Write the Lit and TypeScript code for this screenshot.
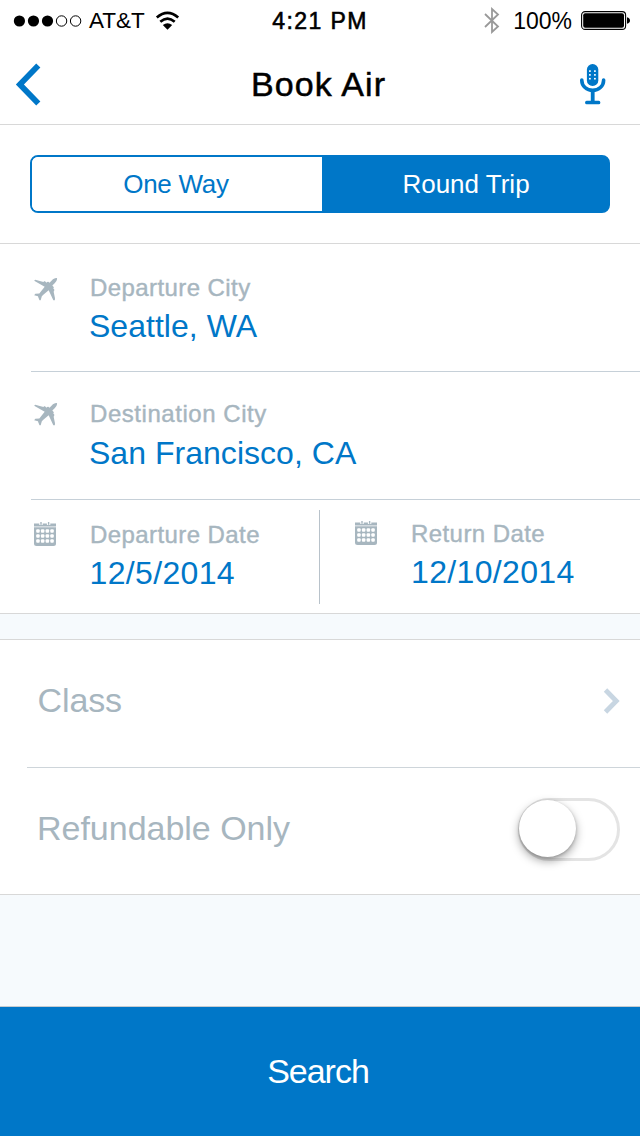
import { LitElement, html, css, svg } from "lit";
import { customElement, property, state } from "lit/decorators.js";

const plane = svg`<path d="M69 .5C63 -.5 58 2.500 54 7L46.500 14L43 11.500L39 12L37.500 14L33 10L30 10L28.500 12L3.500 5L.5 8L32 26L19 42.500L16 46.500L4 47.500L.5 51.500L12 54.500L12.500 57L16.500 67L20 67L23.500 54.500L28 50L44 37L58 66.500L62.500 67L63 61L59 41L61 37L60.500 34L58 32L59.500 28L57 25L55 22.500L62 15.500C67 10.500 70 6 69 .5Z"/>`;

@customElement("field-cell")
export class FieldCell extends LitElement {
  @property() label = "";
  @property() value = "";
  @property() icon: "plane" | "calendar" = "plane";

  static styles = css`
    :host { display: flex; align-items: flex-start; }
    .icon { flex: none; display: block; width: 25px; height: 25px; margin: var(--icon-top, 0) 31px 0 3px; fill: #a7b6bf; }
    .texts { display: flex; flex-direction: column; }
    .label { font-size: 24px; line-height: 30px; letter-spacing: var(--label-spacing, 0.42px); color: #a7b6bf; -webkit-text-stroke: 0.4px #a7b6bf; white-space: nowrap; }
    .value { font-size: 32px; line-height: 38px; margin-top: var(--value-top, 5px); margin-left: var(--value-left, 0); letter-spacing: var(--value-spacing, 0.03px); color: #0077c8; white-space: nowrap; }
  `;

  private calendar() {
    const cells = [];
    for (let r = 0; r < 3; r++)
      for (let c = 0; c < 4; c++)
        cells.push(svg`<rect x=${2.2 + c * 4.7} y=${7.2 + r * 5} width="3.500" height="3.500" rx="1" fill="#fff"/>`);
    return svg`<path d="M0 1.500H5.300V3H8.700V1.500H12.900V3H16.300V1.500H22V4.600H0Z"/>
      <rect x="6.300" y="0" width="1.400" height="2.800"/><rect x="13.900" y="0" width="1.400" height="2.800"/>
      <path d="M0 5.300H22V21.500Q22 24 19.500 24H2.500Q0 24 0 21.500Z"/>${cells}`;
  }

  render() {
    return html`
      ${this.icon === "plane"
        ? html`<svg class="icon" viewBox="0 0 75 75">${plane}</svg>`
        : html`<svg class="icon" viewBox="0 0 25 25">${this.calendar()}</svg>`}
      <div class="texts">
        <span class="label">${this.label}</span>
        <span class="value">${this.value}</span>
      </div>`;
  }
}

@customElement("app-root")
export class AppRoot extends LitElement {
  @state() private roundTrip = true;

  static styles = css`
    :host { display: flex; flex-direction: column; box-sizing: border-box; width: 640px; height: 1136px; overflow: hidden; background: #f6fafd; font-family: "Liberation Sans", Arial, sans-serif; color: #000; }
    * { box-sizing: border-box; }
    svg { display: block; flex: none; }
    .top { height: 125px; background: #fff; border-bottom: 1px solid #d8d8d8; }
    .status { display: grid; grid-template-columns: 1fr auto 1fr; height: 42px; align-items: center; font-size: 23px; line-height: 42px; }
    .left { display: flex; align-items: center; padding-left: 13px; }
    .carrier { font-size: 22.5px; margin: 0 10px 0 7px; }
    .time { letter-spacing: 1.4px; -webkit-text-stroke: 0.6px #000; }
    .right { display: flex; align-items: center; justify-content: flex-end; padding-right: 10px; }
    .right svg:first-child { margin-top: -2px; }
    .percent { margin: 0 9px 0 13px; }
    .nav { display: grid; grid-template-columns: 60px 1fr 60px; height: 82px; padding-top: 2px; align-items: center; }
    .title { font-size: 34px; line-height: 40px; letter-spacing: 1.05px; text-align: center; padding-right: 3px; -webkit-text-stroke: 0.5px #000; }
    .segments { height: 119px; padding: 30px; background: #fff; border-bottom: 1px solid #d8d8d8; }
    .control { display: grid; grid-template-columns: 290px 1fr; height: 58px; border: 2px solid #0077c8; border-radius: 8px; background: linear-gradient(90deg, #fff 50%, #0077c8 50%); overflow: hidden; }
    .segment { font-size: 26px; line-height: 54px; letter-spacing: -0.25px; text-align: center; color: #0077c8; background: #fff; height: 54px; padding-right: 2px; cursor: pointer; }
    .segment.on { background: #0077c8; color: #fff; letter-spacing: 0; padding: 0 0 0 2px; }
    .fields { background: #fff; height: 370px; border-bottom: 1px solid #d8d8d8; padding-left: 31px; }
    .row { height: 128px; border-bottom: 1px solid #c6d0d8; }
    .city { padding-top: 29px; --icon-top: 5px; --value-left: -1px; --value-top: 4px; }
    .city.dest { padding-top: 27px; --label-spacing: 0.55px; --icon-top: 4px; --value-top: 5px; }
    .dates { display: grid; grid-template-columns: 289px 1fr; height: 113px; --value-spacing: 0.35px; }
    .date { height: 94px; margin-top: 10px; --icon-top: 2px; }
    .dep { border-right: 1px solid #b8c2ca; padding-top: 10px; --value-left: -0.500px; --value-top: 4px; }
    .ret { padding: 9px 0 0 32px; --value-left: 0px; --value-top: 4px; }
    .options { margin-top: 25px; height: 256px; background: #fff; border: solid #d8d8d8; border-width: 1px 0; padding-left: 27px; }
    .option { display: flex; align-items: center; justify-content: space-between; height: 127px; padding: 0 20px 0 10px; font-size: 34px; line-height: 40px; color: #a7b6bf; }
    .option.class { height: 128px; border-bottom: 1px solid #ced5da; }
    .classname { letter-spacing: -0.1px; margin-bottom: 7px; padding-left: 0.500px; }
    .refund { letter-spacing: -0.02px; margin-bottom: 7px; }
    .chev { margin-top: -5px; }
    .toggle { width: 102px; height: 63px; border: 3px solid #e4e4e4; border-radius: 32px; margin-bottom: 4px; }
    .knob { width: 57px; height: 57px; border-radius: 50%; background: #fff; margin: -1px 0 0 -2px; box-shadow: 0 4px 10px rgba(0, 0, 0, 0.36), 0 1px 3px rgba(0, 0, 0, 0.2); }
    .search { margin-top: auto; height: 130px; border: 0; border-top: 1px solid #c5ccd1; background: #0077c8; color: #fff; font-family: inherit; font-size: 34px; line-height: 127px; letter-spacing: -1px; padding: 0 4px 0 0; text-align: center; }
  `;

  render() {
    const dots = [0, 1, 2, 3, 4].map((i) => svg`<circle cx=${6.4 + i * 14.05} cy="6" r=${i < 3 ? 5.6 : 5.2} fill=${i < 3 ? "#000" : "none"} stroke=${i < 3 ? "none" : "#000"}/>`);
    const holes = [0, 1, 2].flatMap((r) => [0, 1].map((c) => svg`<rect x=${9 + c * 5} y=${6.3 + r * 3.8} width="1.800" height="1.600" fill="#fff"/>`));
    return html`
      <header class="top">
        <div class="status">
          <div class="left">
            <svg width="69" height="13">${dots}</svg>
            <span class="carrier">AT&amp;T</span>
            <svg width="25" height="21" fill="none" stroke="#000">
              <path d="M1.800 6.500Q12.500 -2.700 23.200 6.500" stroke-width="2.700"/>
              <path d="M5.300 10.800Q12.500 4.500 19.700 10.800" stroke-width="2.700"/>
              <path d="M7.800 14Q12.500 10.300 17.200 14L12.500 18.700Z" fill="#000" stroke="none"/>
            </svg>
          </div>
          <span class="time">4:21 PM</span>
          <div class="right">
            <svg width="16" height="27" fill="none" stroke="#999" stroke-width="1.800"><path d="M1 7L14 19.500L8 25V2L14 7.500L1 20"/></svg>
            <span class="percent">100%</span>
            <svg width="49" height="20">
              <rect x=".6" y=".6" width="44" height="17.800" rx="3.500" fill="none" stroke="#000" stroke-width="1.100"/>
              <rect x="2.200" y="2.200" width="40.800" height="14.600" rx="2"/>
              <path d="M46 6.200Q49 7 49 9.500T46 12.800Z"/>
            </svg>
          </div>
        </div>
        <div class="nav">
          <svg width="60" height="50" fill="none" stroke="#0077c8" stroke-width="5.800"><path d="M38.300 6.500L19.900 25.500L38.300 44.500"/></svg>
          <span class="title">Book Air</span>
          <svg width="27" height="41" fill="#0077c8">
            <rect x="6.900" y="0" width="11.400" height="22" rx="5.600"/>${holes}
            <path d="M1.800 16V16.500A10.800 9.800 0 0 0 23.600 16.500V16" fill="none" stroke="#0077c8" stroke-width="3.600" stroke-linecap="round"/>
            <rect x="10.800" y="26" width="3.800" height="12"/><rect x="5.100" y="36.700" width="15.200" height="3.600" rx="1.500"/>
          </svg>
        </div>
      </header>
      <section class="segments">
        <div class="control">
          <div class="segment ${this.roundTrip ? "" : "on"}" @click=${() => (this.roundTrip = false)}>One Way</div>
          <div class="segment ${this.roundTrip ? "on" : ""}" @click=${() => (this.roundTrip = true)}>Round Trip</div>
        </div>
      </section>
      <section class="fields">
        <div class="row"><field-cell class="city" label="Departure City" value="Seattle, WA"></field-cell></div>
        <div class="row"><field-cell class="city dest" label="Destination City" value="San Francisco, CA"></field-cell></div>
        <div class="dates">
          <field-cell class="date dep" icon="calendar" label="Departure Date" value="12/5/2014"></field-cell>
          <field-cell class="date ret" icon="calendar" label="Return Date" value="12/10/2014"></field-cell>
        </div>
      </section>
      <section class="options">
        <div class="option class">
          <span class="classname">Class</span>
          <svg class="chev" width="17" height="26" fill="none" stroke="#c8d6e2" stroke-width="4.800"><path d="M2.500 2L13.300 13L2.500 24"/></svg>
        </div>
        <div class="option">
          <span class="refund">Refundable Only</span>
          <div class="toggle"><div class="knob"></div></div>
        </div>
      </section>
      <button class="search">Search</button>`;
  }
}
